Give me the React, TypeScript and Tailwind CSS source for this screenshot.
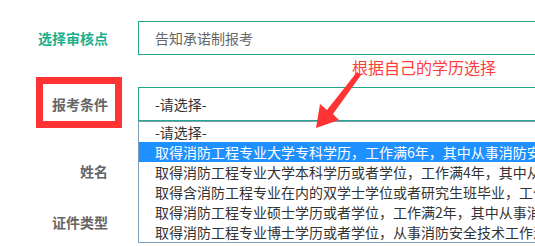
import React from "react";

const items = [
  "-请选择-",
  "取得消防工程专业大学专科学历，工作满6年，其中从事消防安全技术工作满4年",
  "取得消防工程专业大学本科学历或者学位，工作满4年，其中从事消防安全技术工作满3年",
  "取得含消防工程专业在内的双学士学位或者研究生班毕业，工作满3年，其中从事消防安全技术工作满2年",
  "取得消防工程专业硕士学历或者学位，工作满2年，其中从事消防安全技术工作满1年",
  "取得消防工程专业博士学历或者学位，从事消防安全技术工作满1年",
];

export default function App() {
  return (
    <div
      className="relative w-[535px] h-[246px] overflow-hidden bg-white text-[14px]"
      style={{ fontFamily: '"Noto Sans CJK SC", "Noto Sans", sans-serif' }}
    >
      <div className="flex flex-col">
        <div className="mt-[21px] flex items-center h-[34px]">
          <div className="w-[108px] shrink-0 text-right font-bold text-[#1aaf8b] leading-[34px]">选择审核点</div>
          <div className="ml-[30px] w-[420px] h-[34px] shrink-0 border border-[#25a88a] pl-[16px] leading-[32px] text-[#666]">
            告知承诺制报考
          </div>
        </div>
        <div className="mt-[32px] flex items-center h-[34px]">
          <div className="w-[108px] shrink-0 text-right font-bold text-[#666] leading-[34px]">报考条件</div>
          <div className="ml-[30px] w-[420px] h-[34px] shrink-0 border border-[#25a88a] pl-[16px] leading-[32px] text-[#333]">
            -请选择-
          </div>
        </div>
        <div className="mt-[33px] flex items-center h-[34px]">
          <div className="w-[108px] shrink-0 text-right font-bold text-[#666] leading-[34px]">姓名</div>
        </div>
        <div className="mt-[17px] flex items-center h-[34px]">
          <div className="w-[108px] shrink-0 text-right font-bold text-[#666] leading-[34px]">证件类型</div>
        </div>
      </div>

      {/* dropdown list */}
      <div className="absolute left-[138px] top-[121px] w-[420px] border border-[#7f9db9] bg-white">
        {items.map((t, i) => (
          <div
            key={i}
            className={
              "h-[20px] pl-[16px] leading-[20px] whitespace-nowrap " +
              (i === 1 ? "bg-[#1e90ff] text-white" : "text-[#333]")
            }
          >
            {t}
          </div>
        ))}
      </div>

      {/* red annotation box */}
      <div className="absolute left-[36px] top-[77px] w-[86px] h-[51px] border-[7px] border-[#ff3333]" />

      {/* annotation text */}
      <div className="absolute left-[352px] top-[57px] text-[16px] leading-[20px] text-[#ff3b3b] whitespace-nowrap">
        根据自己的学历选择
      </div>

      {/* arrow */}
      <svg className="absolute left-0 top-0" width="535" height="246" viewBox="0 0 535 246">
        <polygon
          points="357,72 361,75 333,114 339,120 316,128 320,104 327,110"
          fill="#ff3333"
        />
      </svg>
    </div>
  );
}
